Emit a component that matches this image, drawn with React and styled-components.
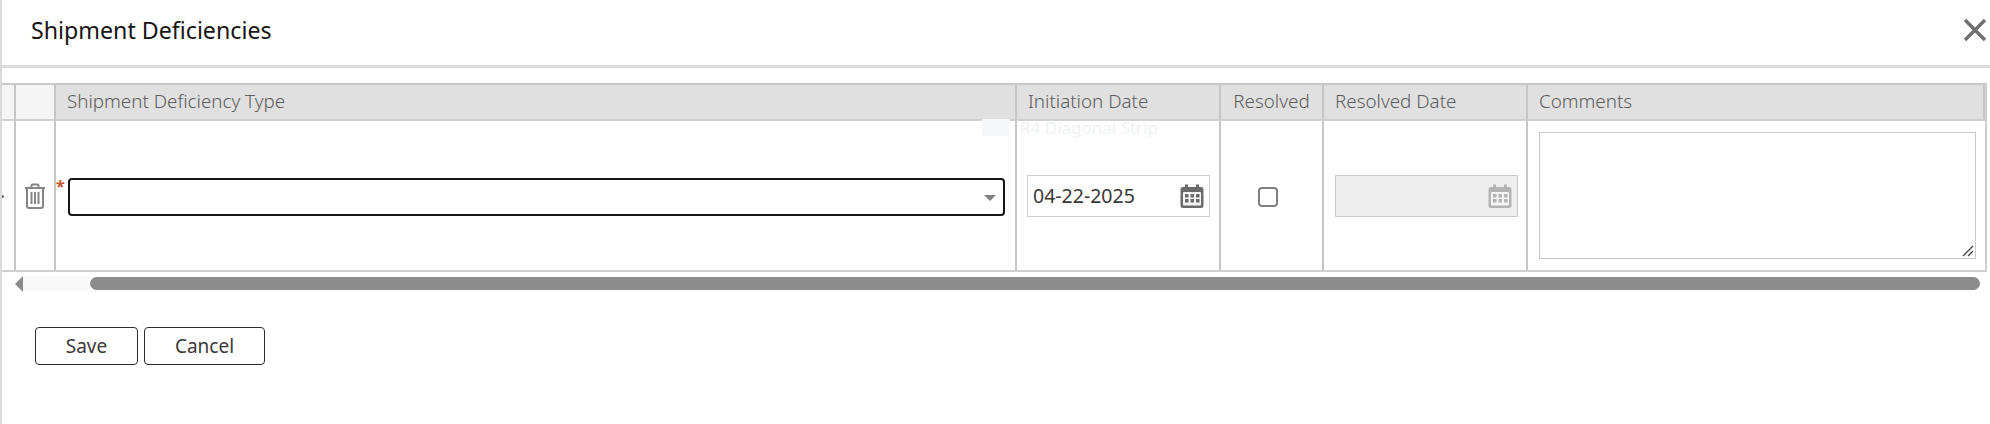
import React from 'react';
import styled, { createGlobalStyle } from 'styled-components';

const GlobalStyle = createGlobalStyle`
  html, body {
    margin: 0;
    padding: 0;
    background: #fff;
    overflow: hidden;
  }
  body {
    font-family: "Noto Sans", "Open Sans", sans-serif;
  }
`;

const Dialog = styled.div`
  width: 1990px;
  height: 424px;
  box-sizing: border-box;
  border-left: 2px solid #d9d9d9;
  background: #fff;
  overflow: hidden;
`;

const TitleBar = styled.div`
  display: flex;
  align-items: center;
  justify-content: space-between;
  height: 65px;
  padding: 0 0 0 29px;
  border-bottom: 3px solid #dcdcdc;
`;

const Title = styled.h1`
  margin: -5px 0 0;
  font-size: 23.2px;
  font-weight: 400;
  color: #161513;
`;

const CloseButton = styled.button`
  display: flex;
  align-items: center;
  justify-content: center;
  width: 26px;
  height: 26px;
  margin: -5px 2px 0 0;
  padding: 0;
  border: 0;
  background: none;
`;

const TableWrap = styled.div`
  margin: 15px 0 0 0;
  width: 1985px;
`;

const Grid = styled.div`
  display: grid;
  grid-template-columns: 14px 40px 961px 204px 103px 204px 1fr;
  border-top: 2px solid #c8c8c8;
  border-bottom: 2px solid #cfcfcf;
  border-right: 2px solid #cfcfcf;
  background: #fff;
`;

const HeaderCell = styled.div`
  height: 36px;
  display: flex;
  align-items: center;
  box-sizing: border-box;
  padding: 0 ${({ $pad }) => $pad ?? 11}px 3px;
  justify-content: ${({ $center }) => ($center ? 'center' : 'flex-start')};
  background: ${({ $blank }) => ($blank ? '#f5f5f5' : '#e0e0e0')};
  border-right: 2px solid #c6c6c6;
  border-bottom: 2px solid #d0d0d0;
  font-size: 18.8px;
  font-weight: 300;
  color: #5c5c5c;
  white-space: nowrap;
  &:last-child {
    border-right: 0;
  }
`;

const Cell = styled.div`
  position: relative;
  height: 149px;
  box-sizing: border-box;
  display: flex;
  align-items: center;
  justify-content: ${({ $center }) => ($center ? 'center' : 'flex-start')};
  padding: ${({ $pad }) => $pad ?? '0 9px 0 10px'};
  border-right: 2px solid #c6c6c6;
  &:last-child {
    border-right: 0;
  }
`;

const Ghost = styled.div`
  position: absolute;
  top: -5px;
  left: -35px;
  display: flex;
  align-items: center;
  gap: 10px;
  font-size: 17px;
  color: #eff2f5;
  white-space: nowrap;
`;

const GhostIcon = styled.span`
  width: 28px;
  height: 17px;
  background: #f5f7f9;
`;

const RowDot = styled.span`
  position: absolute;
  left: -1px;
  top: 74px;
  width: 3px;
  height: 3px;
  background: #666;
  border-radius: 50%;
`;

const Required = styled.span`
  position: absolute;
  left: 0;
  top: 57px;
  font-size: 16px;
  font-weight: 700;
  line-height: 16px;
  color: #c8552a;
`;

const SelectBox = styled.div`
  flex: 1;
  height: 38px;
  box-sizing: border-box;
  margin: 3px 0 0;
  border: 2px solid #161513;
  border-radius: 4px;
  display: flex;
  align-items: center;
  justify-content: flex-end;
  padding-right: 7px;
  background: #fff;
`;

const Caret = styled.span`
  width: 0;
  height: 0;
  margin-top: 2px;
  border-left: 6px solid transparent;
  border-right: 6px solid transparent;
  border-top: 6px solid #808080;
`;

const DateBox = styled.div`
  width: 100%;
  height: 42px;
  box-sizing: border-box;
  display: flex;
  align-items: center;
  justify-content: space-between;
  padding: 0 5px 0 5px;
  border: 1px solid ${({ $disabled }) => ($disabled ? '#c9c9c9' : '#cfcfcf')};
  background: ${({ $disabled }) => ($disabled ? '#eeeeee' : '#fff')};
  font-size: 19.5px;
  color: #3a3836;
`;

const CheckBox = styled.span`
  width: 20px;
  height: 20px;
  box-sizing: border-box;
  margin: 3px 9px 0 0;
  border: 2px solid #808080;
  border-radius: 4px;
  background: #fff;
`;

const CommentBox = styled.div`
  position: relative;
  width: 100%;
  height: 127px;
  box-sizing: border-box;
  border: 1px solid #c9c9c9;
  background: #fff;
`;

const ResizeGrip = styled.svg`
  position: absolute;
  right: 1px;
  bottom: 1px;
`;

const ScrollRow = styled.div`
  display: flex;
  align-items: center;
  height: 17px;
  margin-top: 3px;
  padding-left: 13px;
`;

const ArrowLeft = styled.span`
  width: 0;
  height: 0;
  border-top: 8px solid transparent;
  border-bottom: 8px solid transparent;
  border-right: 8px solid #8a8a8a;
`;

const ScrollTrack = styled.div`
  height: 15px;
  width: 67px;
  background: #f8f8f8;
`;

const ScrollThumb = styled.div`
  height: 13px;
  width: 1890px;
  border-radius: 7px;
  background: #8c8c8c;
`;

const Footer = styled.div`
  display: flex;
  gap: 6px;
  margin: 35px 0 0 33px;
`;

const Button = styled.button`
  width: ${({ $w }) => $w}px;
  height: 38px;
  box-sizing: border-box;
  padding: 0;
  border: 1.5px solid #2e2c2a;
  border-radius: 4px;
  background: #fff;
  font-family: inherit;
  font-size: 19px;
  color: #3a3836;
`;

const CalendarIcon = ({ color }) => (
  <svg width="24" height="26" viewBox="0 0 24 26">
    <path d="M5 1.5h3V4h8V1.5h3V4h2a2.5 2.5 0 0 1 2.5 2.5v16A2.5 2.5 0 0 1 21 25H3a2.5 2.5 0 0 1-2.5-2.5v-16A2.5 2.5 0 0 1 3 4h2z" fill={color} />
    <rect x="3" y="9" width="18" height="13.5" rx="1" fill="#f4f4f4" />
    {[5, 10.5, 16].map((x) =>
      [11, 16].map((y) => <rect key={`${x}-${y}`} x={x} y={y} width="3.5" height="3.5" fill={color} />)
    )}
  </svg>
);

const TrashIcon = () => (
  <svg width="22" height="26" viewBox="0 0 22 26" fill="none" stroke="#868686" strokeWidth="2">
    <path d="M1 5h20M7.5 5V2.5a1 1 0 0 1 1-1h5a1 1 0 0 1 1 1V5" />
    <path d="M3 5v18a2 2 0 0 0 2 2h12a2 2 0 0 0 2-2V5" />
    <path d="M7.5 9v12M11 9v12M14.5 9v12" />
  </svg>
);

const columns = [
  { label: '', blank: true, pad: 0 },
  { label: '', blank: true, pad: 0 },
  { label: 'Shipment Deficiency Type' },
  { label: 'Initiation Date' },
  { label: 'Resolved', pad: 0, center: true },
  { label: 'Resolved Date' },
  { label: 'Comments' },
];

export default function App() {
  return (
    <>
      <GlobalStyle />
      <Dialog>
        <TitleBar>
          <Title>Shipment Deficiencies</Title>
          <CloseButton aria-label="Close">
            <svg width="24" height="24" viewBox="0 0 24 24" stroke="#6f6f6f" strokeWidth="3.4">
              <path d="M2 2l20 20M22 2L2 22" />
            </svg>
          </CloseButton>
        </TitleBar>

        <TableWrap>
          <Grid>
            {columns.map((col, i) => (
              <HeaderCell key={i} $blank={col.blank} $pad={col.pad} $center={col.center}>
                {col.label}
              </HeaderCell>
            ))}

            <Cell $pad="0">
              <RowDot />
            </Cell>
            <Cell $center $pad="0">
              <TrashIcon />
            </Cell>
            <Cell $pad="0 10px 0 12px">
              <Required>*</Required>
              <SelectBox>
                <Caret />
              </SelectBox>
            </Cell>
            <Cell>
              <Ghost>
                <GhostIcon />
                <span>R4 Diagonal Strip</span>
              </Ghost>
              <DateBox>
                04-22-2025
                <CalendarIcon color="#6b6b6b" />
              </DateBox>
            </Cell>
            <Cell $center>
              <CheckBox />
            </Cell>
            <Cell $pad="0 8px 0 11px">
              <DateBox $disabled>
                <span />
                <CalendarIcon color="#b4b4b4" />
              </DateBox>
            </Cell>
            <Cell $pad="0 9px 0 11px">
              <CommentBox>
                <ResizeGrip width="12" height="12" viewBox="0 0 12 12" stroke="#444" strokeWidth="1.4">
                  <path d="M1 11L11 1M6 11l5-5" />
                </ResizeGrip>
              </CommentBox>
            </Cell>
          </Grid>

          <ScrollRow>
            <ArrowLeft />
            <ScrollTrack />
            <ScrollThumb />
          </ScrollRow>
        </TableWrap>

        <Footer>
          <Button $w={103}>Save</Button>
          <Button $w={121}>Cancel</Button>
        </Footer>
      </Dialog>
    </>
  );
}
